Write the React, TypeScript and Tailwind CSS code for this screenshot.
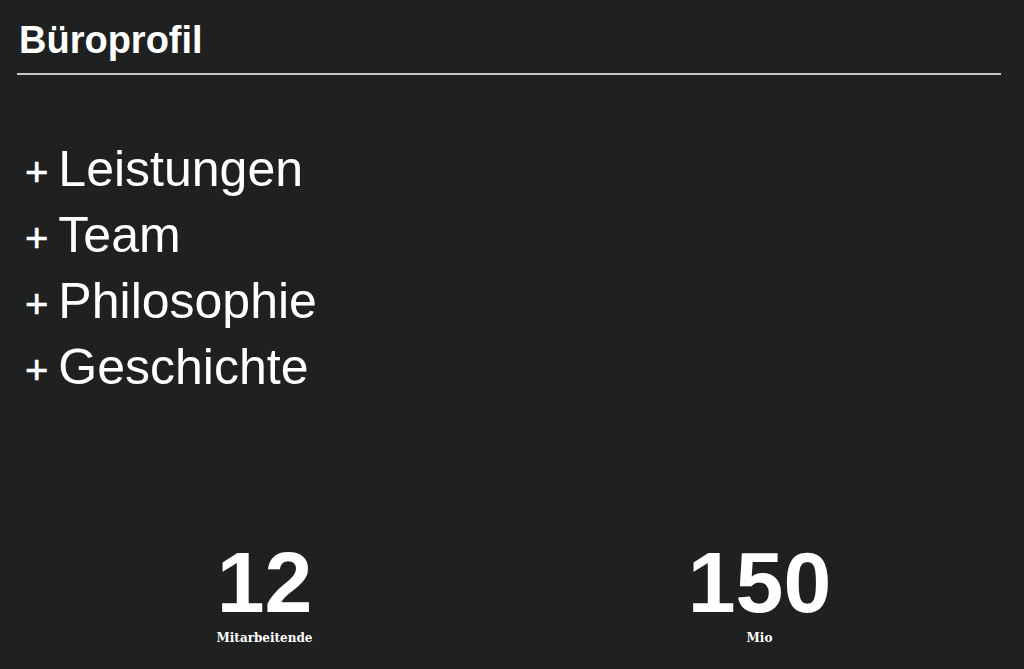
import React from 'react';

const items = ['Leistungen', 'Team', 'Philosophie', 'Geschichte'];

const stats = [
  { value: '12', label: 'Mitarbeitende' },
  { value: '150', label: 'Mio' },
];

export default function App() {
  return (
    <div className="w-[1024px] h-[669px] overflow-hidden bg-[#1f2020] text-white px-[17px] font-['Liberation_Sans',Arial,sans-serif]">
      <h1 className="pt-[21px] pl-[2px] text-[38px] font-bold leading-none">Büroprofil</h1>
      <div className="mt-[14px] h-[2px] w-[984px] bg-[#c8c8c8]" />

      <ul className="mt-[61px] pl-[8px]">
        {items.map(item => (
          <li key={item} className="text-[50px] leading-[66px]">
            <span className="text-[40px] leading-none mr-[10px] [-webkit-text-stroke:0.6px_white]">+</span>
            {item}
          </li>
        ))}
      </ul>

      <div className="mt-[139px] grid grid-cols-2">
        {stats.map(s => (
          <div key={s.label} className="flex flex-col items-center">
            <div className="text-[86px] font-bold leading-none">{s.value}</div>
            <div className="mt-[5px] text-[12px] leading-[16px] font-bold font-['DejaVu_Serif',serif]">{s.label}</div>
          </div>
        ))}
      </div>
    </div>
  );
}
